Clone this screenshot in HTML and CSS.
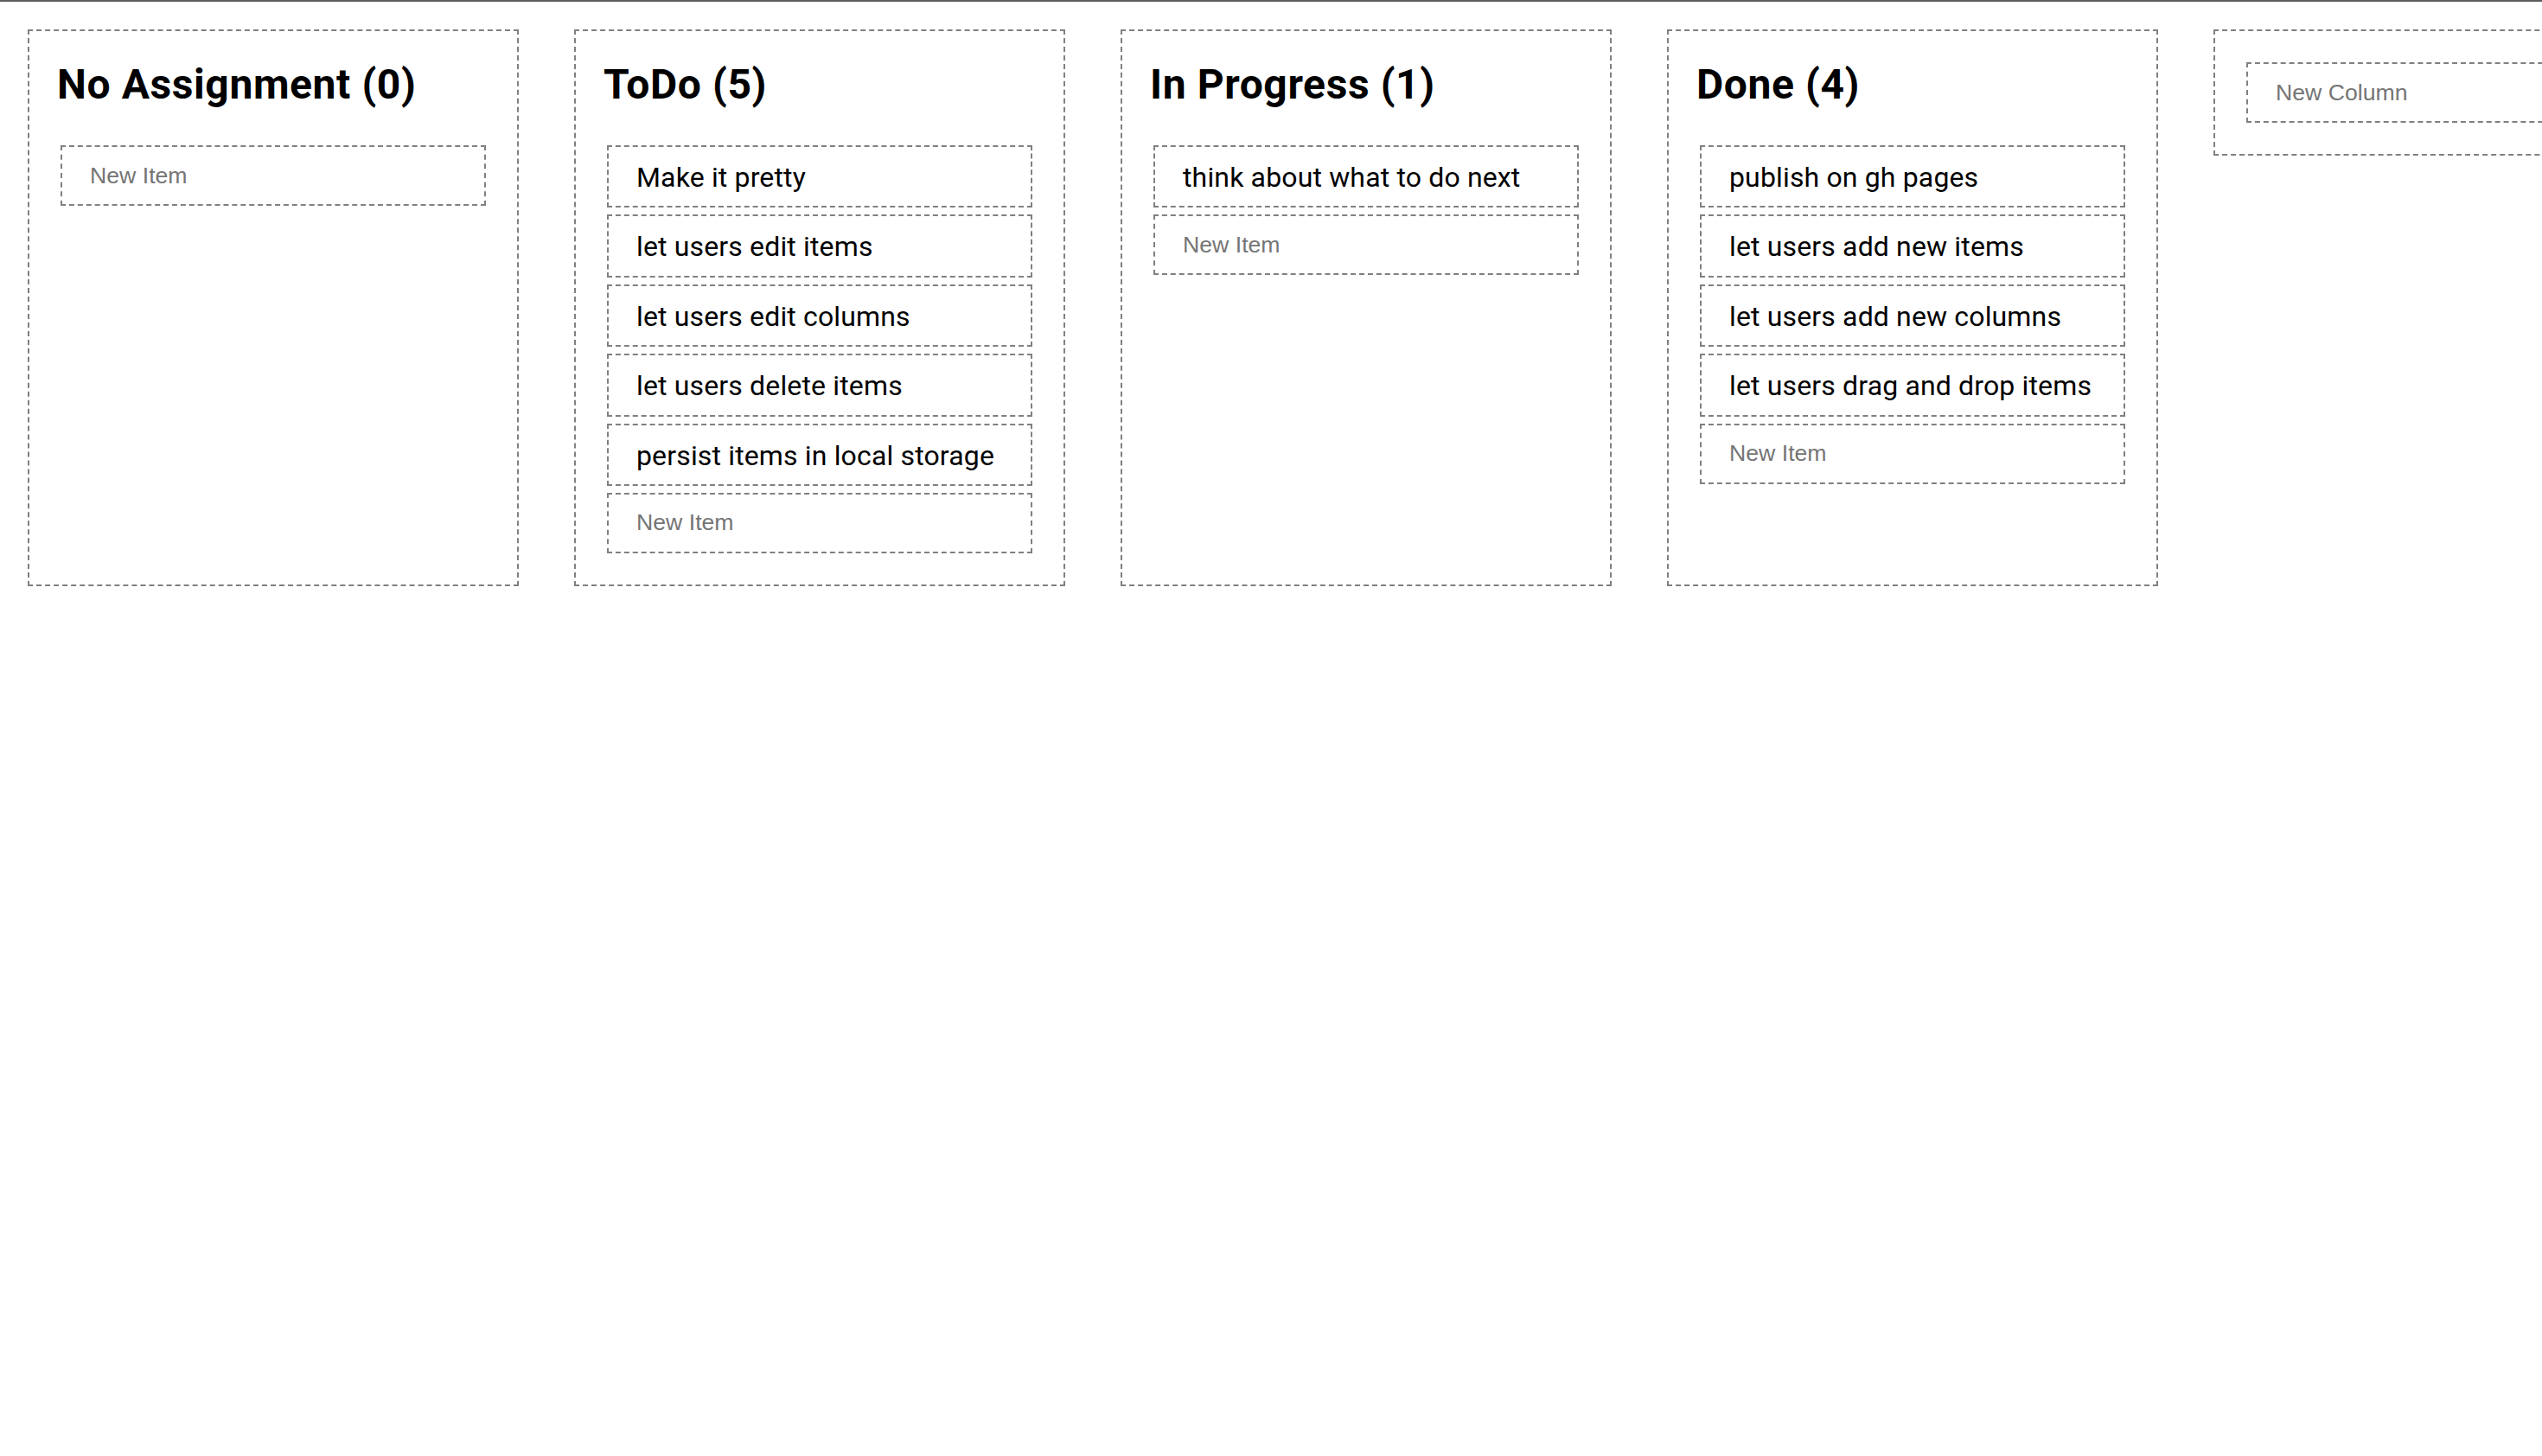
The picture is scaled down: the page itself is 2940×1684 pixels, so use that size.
FILE: index.html
```html
<!DOCTYPE html>
<html lang="en">
<head>
<meta charset="utf-8">
<title>Kanban</title>
<link rel="stylesheet" href="styles.css">
</head>
<body>
<div class="topline"></div>
<main class="board">
  <section class="column">
    <h2 class="column-title">No Assignment (0)</h2>
    <div class="items">
      <input class="new-input" type="text" placeholder="New Item">
    </div>
  </section>
  <section class="column">
    <h2 class="column-title">ToDo (5)</h2>
    <div class="items">
      <div class="item">Make it pretty</div>
      <div class="item">let users edit items</div>
      <div class="item">let users edit columns</div>
      <div class="item">let users delete items</div>
      <div class="item">persist items in local storage</div>
      <input class="new-input" type="text" placeholder="New Item">
    </div>
  </section>
  <section class="column">
    <h2 class="column-title">In Progress (1)</h2>
    <div class="items">
      <div class="item">think about what to do next</div>
      <input class="new-input" type="text" placeholder="New Item">
    </div>
  </section>
  <section class="column">
    <h2 class="column-title">Done (4)</h2>
    <div class="items">
      <div class="item">publish on gh pages</div>
      <div class="item">let users add new items</div>
      <div class="item">let users add new columns</div>
      <div class="item">let users drag and drop items</div>
      <input class="new-input" type="text" placeholder="New Item">
    </div>
  </section>
  <section class="column column-new">
    <div class="items">
      <input class="new-input" type="text" placeholder="New Column">
    </div>
  </section>
</main>
</body>
</html>
```

FILE: styles.css
```css
html, body {
  margin: 0;
  padding: 0;
  background: #ffffff;
}

body {
  font-family: Roboto, "Liberation Sans", sans-serif;
  color: #000000;
  overflow: hidden;
}

.topline {
  height: 2px;
  background: #5c5c5c;
}

.board {
  display: flex;
  align-items: stretch;
  gap: 64px;
  padding: 32px;
}

.column {
  flex: 0 0 568px;
  box-sizing: border-box;
  border: 2px dashed #808080;
  padding: 36px 32px;
}

.column-new {
  align-self: flex-start;
}

.column-title {
  margin: 2px 0 46px;
  font-size: 48px;
  line-height: 48px;
  font-weight: 700;
  letter-spacing: 0.6px;
}

.items {
  display: flex;
  flex-direction: column;
  gap: 8px;
  padding: 0 4px;
}

.item {
  box-sizing: border-box;
  border: 2px dashed #808080;
  padding: 15px 32px 13.4px;
  font-size: 32px;
  line-height: 40px;
  letter-spacing: 0.15px;
  white-space: nowrap;
}

.new-input {
  display: block;
  width: 100%;
  box-sizing: border-box;
  height: 70px;
  margin: 0;
  border: 2px dashed #808080;
  padding: 0 32px;
  font-family: "Liberation Sans", Arial, sans-serif;
  font-size: 26.67px;
  color: #000;
  background: #fff;
  outline: none;
}

.new-input::placeholder {
  color: #757575;
}
```
